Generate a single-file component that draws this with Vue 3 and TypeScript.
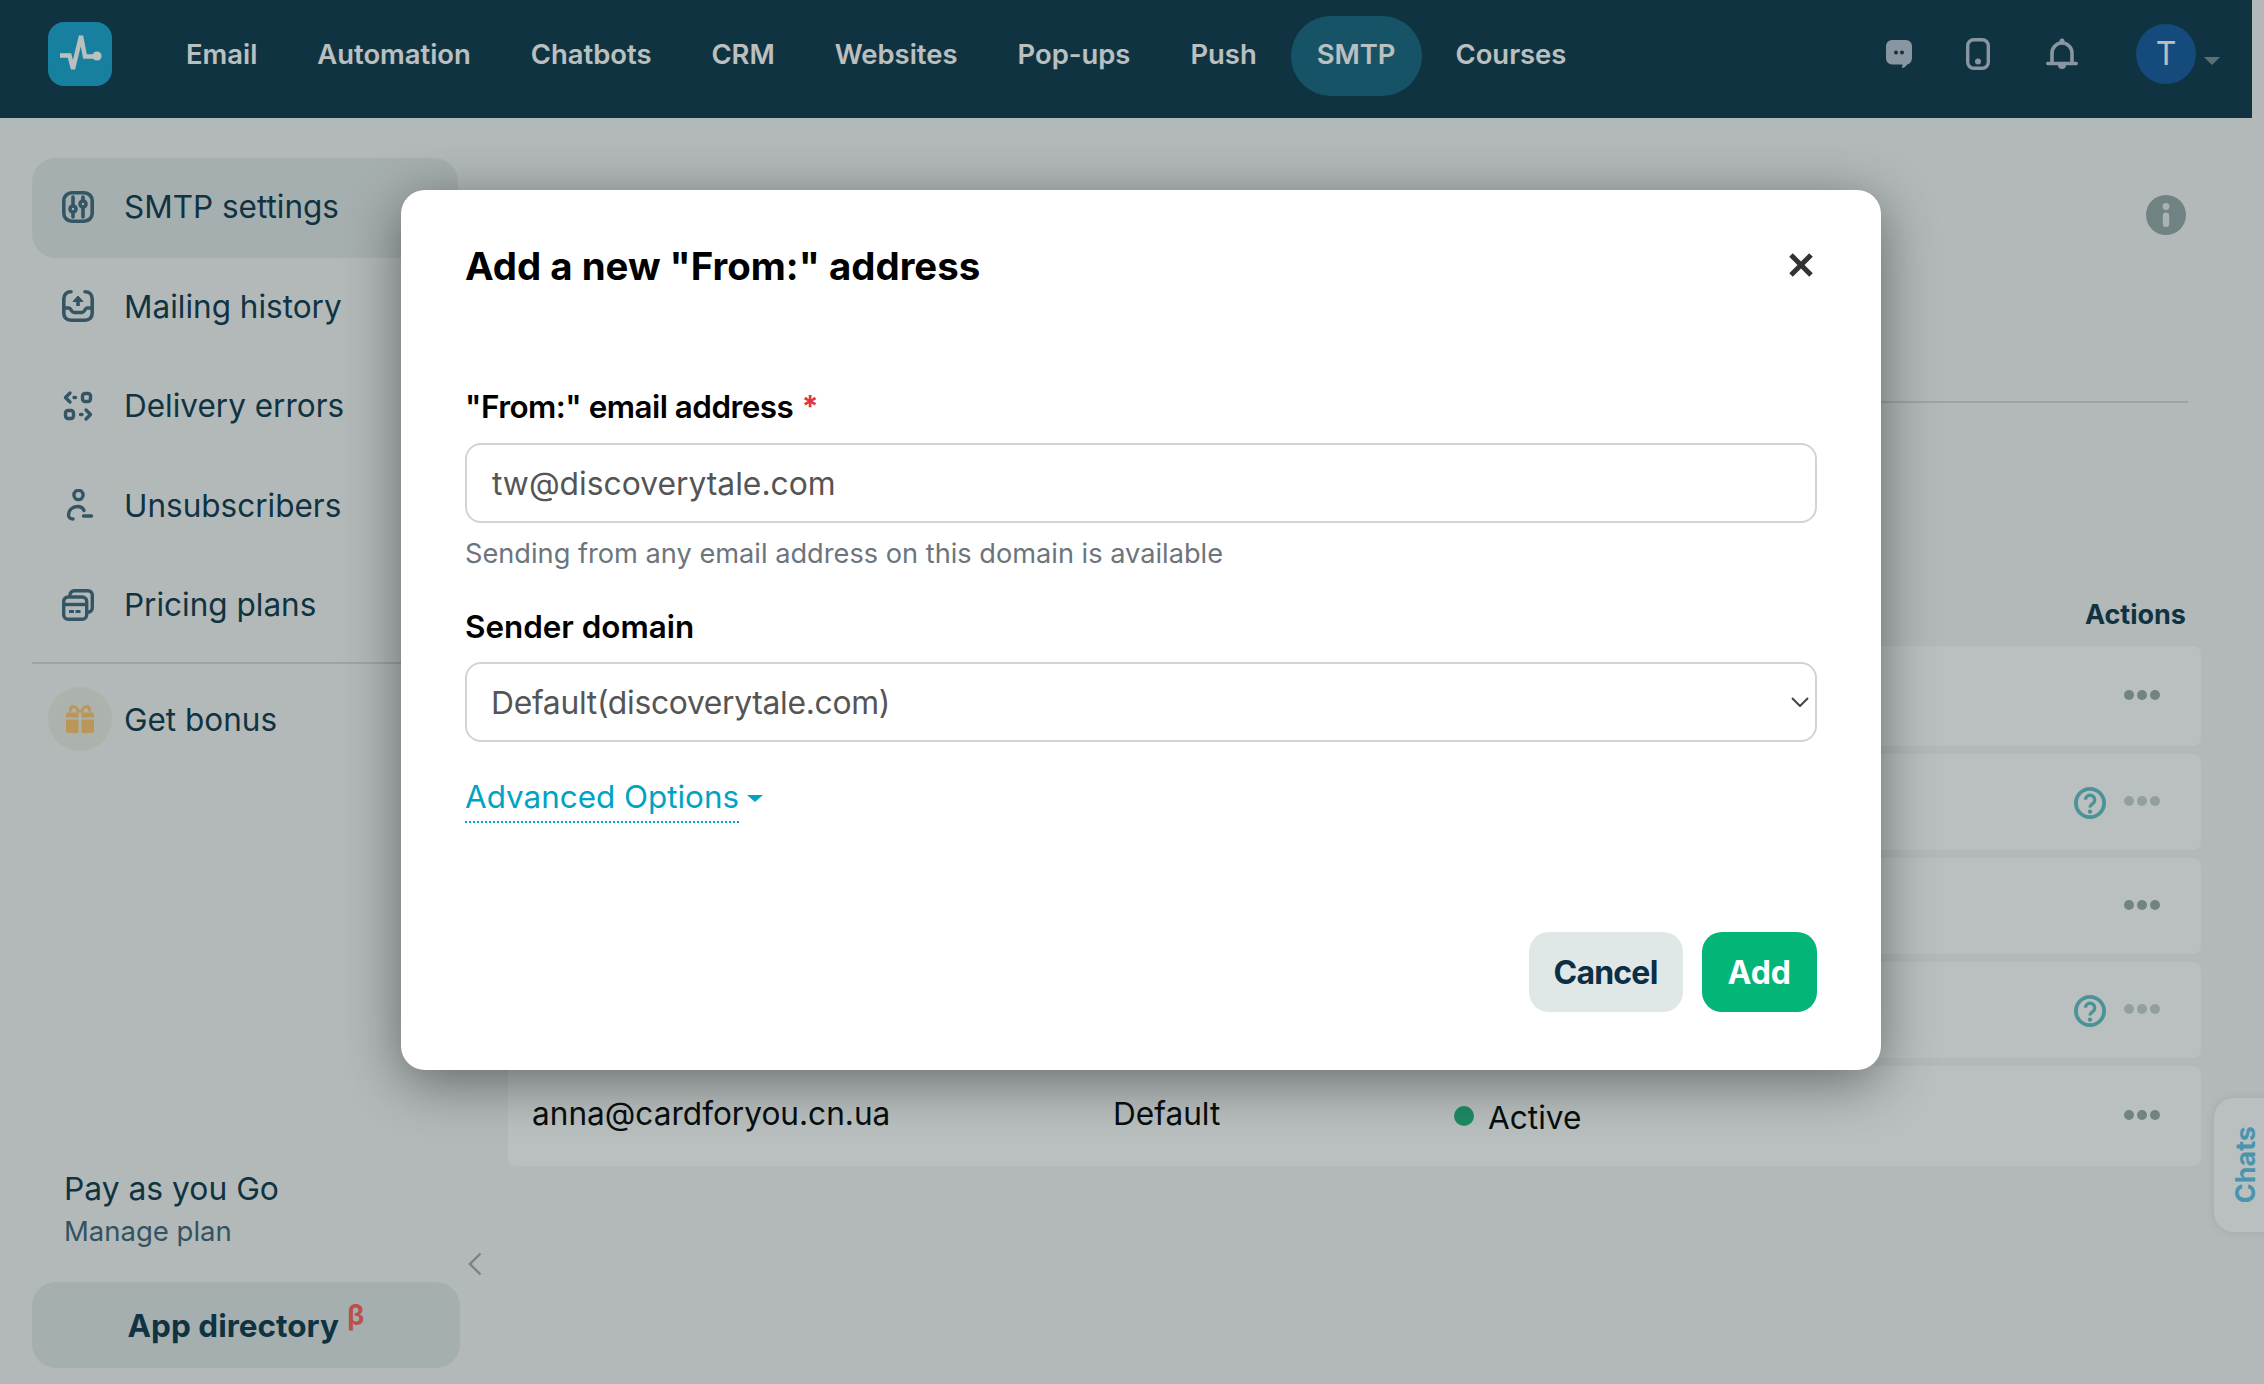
<script setup lang="ts">
const navItems = ['Email', 'Automation', 'Chatbots', 'CRM', 'Websites', 'Pop-ups', 'Push', 'SMTP', 'Courses'];

const rows = [
  { id: 1, help: false, h: 100 },
  { id: 2, help: true, h: 96 },
  { id: 3, help: false, h: 96 },
  { id: 4, help: true, h: 96 },
  { id: 5, help: false, h: 100, email: 'anna@cardforyou.cn.ua', domain: 'Default', status: 'Active' },
];
</script>

<template>
  <div class="page">
    <header class="topbar">
      <div class="logo">
        <svg width="64" height="64" viewBox="0 0 64 64" fill="none">
          <path d="M12 33.5h9.5l3.5 13.5 8-33 4 20.5h12" stroke="#fff" stroke-width="4.4" stroke-linejoin="miter" />
          <circle cx="49" cy="34" r="4.6" fill="#fff" />
        </svg>
      </div>
      <nav class="nav">
        <a v-for="item in navItems" :key="item" class="nav-item" :class="{ current: item === 'SMTP' }">{{ item }}</a>
      </nav>
      <div class="top-icons">
        <svg class="ti-chat" width="26" height="28" viewBox="0 0 26 28">
          <path d="M6 0h14a6 6 0 0 1 6 6v12a7 7 0 0 1-5 6.600c-1 2-3 3.400-5.500 3.400 .8-1 1-2 1-3.400H6a6 6 0 0 1-6-6V6a6 6 0 0 1 6-6z" fill="#b6c3d1" />
          <circle cx="10" cy="12.500" r="2" fill="#0c364b" />
          <circle cx="16" cy="12.500" r="2" fill="#0c364b" />
        </svg>
        <svg class="ti-phone" width="24" height="32" viewBox="0 0 24 32" fill="none">
          <rect x="1.700" y="1.700" width="20.600" height="28.600" rx="6" stroke="#b6c3d1" stroke-width="3.400" />
          <circle cx="12" cy="23.500" r="3" fill="#b6c3d1" />
        </svg>
        <svg class="ti-bell" width="32" height="32" viewBox="0 0 32 32" fill="none">
          <path d="M6 25V15a10 10 0 0 1 20 0V25" stroke="#b6c3d1" stroke-width="3.600" />
          <path d="M1.800 25.500h28.400" stroke="#b6c3d1" stroke-width="3.600" stroke-linecap="round" />
          <circle cx="16" cy="3" r="2.600" fill="#b6c3d1" />
          <path d="M12 27h8a4 4 0 0 1-8 0z" fill="#b6c3d1" />
        </svg>
        <div class="avatar">T</div>
        <span class="avatar-caret"></span>
      </div>
    </header>

    <div class="body">
      <aside class="sidebar">
        <a class="side-item active">
          <svg class="side-ico" width="32" height="32" viewBox="0 0 32 32" fill="none" stroke="#3f667c" stroke-width="3.600">
            <rect x="1.800" y="1.800" width="28.400" height="28.400" rx="8" />
            <path d="M11 6v8M11 22.500v3.500M21 6v3.500M21 17.500V26" stroke-linecap="round" />
            <circle cx="11" cy="18" r="3" />
            <circle cx="21" cy="13" r="3" />
          </svg>
          <span>SMTP settings</span>
        </a>
        <a class="side-item">
          <svg class="side-ico" width="32" height="32" viewBox="0 0 32 32" fill="none" stroke="#3f667c" stroke-width="3.600">
            <path d="M9 1.800C4.500 1.800 1.800 4.500 1.800 9v14c0 4.500 2.700 7.200 7.200 7.200h14c4.500 0 7.200-2.700 7.200-7.200V9c0-4.500-2.700-7.200-7.200-7.200" stroke-linecap="round" />
            <path d="M2 18h5c2 0 2.500 4.500 5 4.500h8c2.500 0 3-4.500 5-4.500h5" />
            <path d="M16 16V9" />
            <path d="M11 11.500 16 6l5 5.500z" fill="#3f667c" stroke-width="1" />
          </svg>
          <span>Mailing history</span>
        </a>
        <a class="side-item">
          <svg class="side-ico" width="32" height="32" viewBox="0 0 32 32" fill="none" stroke="#3f667c" stroke-width="3.400" stroke-linecap="round" stroke-linejoin="round">
            <path d="M8 3 3.500 7.500 8 12M12 7.500h1.500" />
            <rect x="20.500" y="3.500" width="8" height="8" rx="2.500" />
            <rect x="3.500" y="20.500" width="8" height="8" rx="2.500" />
            <path d="M24 20l4.500 4.500L24 29M18.500 24.500H20" />
          </svg>
          <span>Delivery errors</span>
        </a>
        <a class="side-item">
          <svg class="side-ico" width="32" height="32" viewBox="0 0 32 32" fill="none" stroke="#3f667c" stroke-width="3.400" stroke-linecap="round">
            <circle cx="16.500" cy="6" r="4.600" />
            <path d="M11 30c-2.500 0-4.500-1.500-4.500-4C6.500 21 10.500 17.500 15.500 17.500c3 0 5.500 1.500 6.500 4" />
            <path d="M21.500 27h8" />
          </svg>
          <span>Unsubscribers</span>
        </a>
        <a class="side-item">
          <svg class="side-ico" width="32" height="32" viewBox="0 0 32 32" fill="none" stroke="#3f667c" stroke-width="3.400">
            <path d="M8 7V6a4.300 4.300 0 0 1 4.300-4.300H26A4.300 4.300 0 0 1 30.300 6v13a4.300 4.300 0 0 1-4.300 4.300h-1" />
            <rect x="1.700" y="8" width="23" height="22.300" rx="4.500" />
            <path d="M2 15.500h22" />
            <path d="M7 22.500h12" stroke-width="2.800" stroke-dasharray="5 1.500" />
          </svg>
          <span>Pricing plans</span>
        </a>
        <div class="side-divider"></div>
        <a class="side-item bonus">
          <span class="gift-wrap">
            <svg width="28" height="28" viewBox="0 0 28 28" fill="none">
              <path d="M0 10a2.500 2.500 0 0 1 2.500-2.500h23A2.500 2.500 0 0 1 28 10v15.500a2.500 2.500 0 0 1-2.500 2.500h-23A2.500 2.500 0 0 1 0 25.500z" fill="#ffc46c" />
              <path d="M12.500 7.500v20.500h3V7.500zM0 12.500v2h28v-2z" fill="#ecebe2" />
              <path d="M13 7.500C11.500 4 9.500 1.500 7.300 1.500 5 1.500 4 4 5.200 6.500M15 7.500C16.500 4 18.500 1.500 20.700 1.500 23 1.500 24 4 22.800 6.500" stroke="#ffc46c" stroke-width="3" />
            </svg>
          </span>
          <span>Get bonus</span>
        </a>
        <div class="plan">
          <div class="plan-name">Pay as you Go</div>
          <div class="plan-link">Manage plan</div>
        </div>
        <a class="apps">App directory <sup class="beta">β</sup></a>
      </aside>

      <svg class="collapse" width="14" height="24" viewBox="0 0 14 24" fill="none">
        <path d="M12.500 1.500 2 12l10.500 10.500" stroke="#a8a6a6" stroke-width="2.400" />
      </svg>

      <main class="content">
        <div class="content-head">
          <svg width="40" height="40" viewBox="0 0 40 40">
            <circle cx="20" cy="20" r="20" fill="#95a6a6" />
            <circle cx="20" cy="11.500" r="3.400" fill="#e8ecec" />
            <rect x="16.800" y="17.500" width="6.400" height="14.500" rx="3.200" fill="#e8ecec" />
          </svg>
        </div>
        <div class="content-rule"></div>
        <div class="table-head"><span>Actions</span></div>
        <div class="table">
          <div v-for="row in rows" :key="row.id" class="row" :style="{ height: row.h + 'px' }">
            <template v-if="row.email">
              <span class="cell-mail">{{ row.email }}</span>
              <span class="cell-domain">{{ row.domain }}</span>
              <span class="cell-status"><i class="status-dot"></i><span class="status-text">{{ row.status }}</span></span>
            </template>
            <svg v-if="row.help" class="help" width="32" height="32" viewBox="0 0 32 32" fill="none">
              <circle cx="16" cy="16" r="14.100" stroke="#62bdc4" stroke-width="3.800" />
              <path d="M11.500 12.800a4.600 4.600 0 1 1 7.200 3.800c-1.800 1.200-2.700 2-2.700 4" stroke="#62bdc4" stroke-width="3.200" />
              <circle cx="16" cy="24.600" r="2.200" fill="#62bdc4" />
            </svg>
            <span class="dots" :class="{ dim: row.help }"><i></i><i></i><i></i></span>
          </div>
        </div>
      </main>
    </div>

    <div class="chats-tab"><span>Chats</span></div>

    <div class="overlay">
      <section class="modal">
        <div class="modal-head">
          <h2>Add a new "From:" address</h2>
          <svg width="26" height="26" viewBox="0 0 26 26" fill="none">
            <path d="M3 3l20 20M23 3 3 23" stroke="#333" stroke-width="5" />
          </svg>
        </div>
        <label class="field-label from">"From:" email address <em>*</em></label>
        <div class="input">tw@discoverytale.com</div>
        <p class="hint">Sending from any email address on this domain is available</p>
        <label class="field-label second">Sender domain</label>
        <div class="input select">
          <span>Default(discoverytale.com)</span>
          <svg width="18" height="10" viewBox="0 0 18 10" fill="none">
            <path d="M1 1l8 8 8-8" stroke="#444" stroke-width="2" />
          </svg>
        </div>
        <div class="advanced">
          <a>Advanced Options</a>
          <i class="adv-caret"></i>
        </div>
        <div class="modal-actions">
          <button class="btn cancel">Cancel</button>
          <button class="btn add">Add</button>
        </div>
      </section>
    </div>
  </div>
</template>

<style>
html,
body {
  margin: 0;
  background: #f5f5f5;
}
</style>

<style scoped>
.page {
  position: relative;
  width: 2264px;
  height: 1384px;
  overflow: hidden;
  background: #f5f5f5;
  font-family: Inter, "Noto Sans", sans-serif;
  color: #0c364b;
  display: flex;
  flex-direction: column;
}
.topbar {
  width: 2252px;
  height: 118px;
  flex: none;
  background: #0c364b;
  display: flex;
  align-items: center;
  padding: 0 32px 10px 48px;
  box-sizing: border-box;
}
.logo {
  width: 64px;
  height: 64px;
  border-radius: 16px;
  background: #16a4ce;
  flex: none;
}
.nav {
  display: flex;
  gap: 8px;
  margin-left: 48px;
  margin-top: 3px;
}
.nav-item {
  height: 80px;
  line-height: 76px;
  padding: 0 26px;
  border-radius: 40px;
  color: #fff;
  font-size: 27.400px;
  font-weight: 600;
}
.nav-item.current {
  background: #16637f;
}
.top-icons {
  margin-left: auto;
  display: flex;
  align-items: center;
}
.ti-chat {
  margin-right: 54px;
}
.ti-phone {
  margin-right: 56px;
}
.ti-bell {
  margin-right: 58px;
}
.avatar {
  width: 60px;
  height: 60px;
  border-radius: 50%;
  background: #13569e;
  color: #fff;
  font-size: 32px;
  text-align: center;
  line-height: 60px;
}
.avatar-caret {
  margin-left: 8px;
  margin-top: 14px;
  border-left: 8px solid transparent;
  border-right: 8px solid transparent;
  border-top: 8px solid #7a8d98;
}
.body {
  flex: 1;
  display: flex;
  position: relative;
  min-height: 0;
}
.sidebar {
  width: 428px;
  flex: none;
  margin-left: 32px;
  padding: 40px 0 16px;
  box-sizing: border-box;
  display: flex;
  flex-direction: column;
}
.side-item {
  height: 99.500px;
  flex: none;
  display: flex;
  align-items: center;
  padding: 0 0 2px 30px;
  gap: 30px;
  font-size: 31.500px;
  border-radius: 24px;
  box-sizing: border-box;
}
.side-item.active {
  background: #e2e7e8;
  margin-right: 2px;
}
.side-ico {
  flex: none;
}
.side-divider {
  height: 2px;
  background: #d5d9d9;
  margin: 6px 0 0;
  flex: none;
}
.side-item.bonus {
  padding-left: 16px;
  gap: 12px;
  height: 113px;
}
.gift-wrap {
  width: 64px;
  height: 64px;
  border-radius: 50%;
  background: #ecebe2;
  display: flex;
  align-items: center;
  justify-content: center;
  flex: none;
}
.plan {
  margin-top: auto;
  padding-left: 32px;
  margin-bottom: 29px;
}
.plan-name {
  font-size: 31.800px;
  line-height: 43px;
}
.plan-link {
  font-size: 27.500px;
  line-height: 43px;
  color: #3f6478;
}
.apps {
  height: 86px;
  flex: none;
  background: #e2e7e8;
  border-radius: 24px;
  display: flex;
  align-items: center;
  justify-content: center;
  font-size: 31.500px;
  font-weight: 700;
  white-space: pre;
}
.beta {
  color: #ff5f58;
  font-size: 28px;
  font-weight: 700;
  align-self: flex-start;
  margin: 19px 0 0 1px;
  line-height: 28px;
}
.collapse {
  position: absolute;
  left: 468px;
  top: 1134px;
}
.content {
  margin-left: 48px;
  width: 1693px;
  flex: none;
}
.content-head {
  height: 77px;
  padding-top: 77px;
  box-sizing: content-box;
  display: flex;
  justify-content: flex-end;
  padding-right: 15px;
}
.content-rule {
  height: 2px;
  background: #d5d9d9;
  margin: 129px 13px 0 0;
}
.table-head {
  height: 243px;
  display: flex;
  justify-content: flex-end;
  align-items: flex-end;
  padding: 0 15px 15px 0;
  box-sizing: border-box;
  font-size: 27px;
  font-weight: 700;
}
.table {
  display: flex;
  flex-direction: column;
  gap: 8px;
}
.row {
  background: #fff;
  border-radius: 8px;
  display: flex;
  align-items: center;
  position: relative;
  padding-right: 41px;
  justify-content: flex-end;
  font-size: 31.600px;
  color: #000;
}
.cell-mail {
  position: absolute;
  left: 24px;
  top: 28px;
}
.cell-domain {
  position: absolute;
  left: 605px;
  top: 28px;
}
.cell-status {
  position: absolute;
  left: 946px;
  display: flex;
  align-items: center;
  gap: 14px;
}
.status-dot {
  width: 20px;
  height: 20px;
  border-radius: 50%;
  background: #20b47b;
}
.status-text {
  position: relative;
  top: 1px;
}
.help {
  margin-right: 18px;
  margin-top: 2px;
}
.dots {
  display: flex;
  gap: 3px;
  margin-top: -3px;
}
.dots i {
  width: 10px;
  height: 10px;
  border-radius: 50%;
  background: #97a8a8;
}
.dots.dim i {
  background: #c8d0d0;
}
.chats-tab {
  position: absolute;
  right: -6px;
  top: 1098px;
  width: 56px;
  height: 134px;
  border-radius: 20px 0 0 20px;
  background: #fff;
  box-shadow: 0 0 8px rgba(0, 0, 0, 0.1);
  display: flex;
  align-items: center;
  justify-content: center;
}
.chats-tab span {
  writing-mode: vertical-rl;
  transform: rotate(180deg);
  font-size: 27px;
  font-weight: 700;
  color: #5fc0e5;
  position: relative;
  left: 3px;
}
.overlay {
  position: absolute;
  inset: 0;
  background: rgba(25, 45, 45, 0.3);
  padding: 190px 0 0 401px;
  box-sizing: border-box;
}
.modal {
  width: 1480px;
  height: 880px;
  background: #fff;
  border-radius: 24px;
  box-shadow: 0 12px 56px rgba(0, 0, 0, 0.45);
  padding: 0 64px;
  box-sizing: border-box;
  display: flex;
  flex-direction: column;
  color: #000;
}
.modal-head {
  height: 152px;
  flex: none;
  display: flex;
  align-items: center;
  justify-content: space-between;
  padding-right: 3px;
}
.modal-head svg {
  margin-top: -3px;
}
.modal-head h2 {
  margin: 0;
  font-size: 38.400px;
  font-weight: 700;
}
.field-label {
  display: block;
  font-size: 31.400px;
  font-weight: 600;
  line-height: 40px;
  margin-top: 45px;
}
.field-label.from {
  letter-spacing: -0.5px;
}
.field-label.second {
  margin-top: 34px;
}
.field-label em {
  color: #dc3545;
  font-style: normal;
  font-size: 30px;
  line-height: 38px;
  font-weight: 700;
  vertical-align: top;
  margin-left: 1px;
}
.input {
  margin-top: 16px;
  height: 80px;
  box-sizing: border-box;
  border: 2px solid #ced6d5;
  border-radius: 16px;
  padding: 0 25px;
  display: flex;
  align-items: center;
  font-size: 31.800px;
  color: #555;
}
.field-label.second + .input {
  margin-top: 15px;
}
.select {
  justify-content: space-between;
  padding: 0 6px 0 24px;
  letter-spacing: -0.3px;
}
.hint {
  margin: 12px 0 0;
  font-size: 27.200px;
  line-height: 38px;
  color: #6c757d;
}
.advanced {
  margin-top: 33px;
  display: flex;
  align-items: center;
  color: #00a3c4;
  font-size: 31.400px;
}
.advanced a {
  border-bottom: 2px dotted #00a3c4;
  padding-bottom: 2px;
  line-height: 44px;
}
.adv-caret {
  margin-left: 8px;
  margin-top: -2px;
  border-left: 8px solid transparent;
  border-right: 8px solid transparent;
  border-top: 7px solid #00a3c4;
}
.modal-actions {
  margin-top: auto;
  margin-bottom: 58px;
  display: flex;
  justify-content: flex-end;
  gap: 19px;
}
.btn {
  height: 80px;
  border: 0;
  border-radius: 20px;
  padding: 0 25px;
  font-family: inherit;
  font-size: 32px;
  font-weight: 700;
}
.btn.cancel {
  background: #e0e8e7;
  color: #0c2f45;
  letter-spacing: -0.8px;
}
.btn.add {
  background: #03b576;
  color: #fff;
  padding: 0 26px;
}
</style>
